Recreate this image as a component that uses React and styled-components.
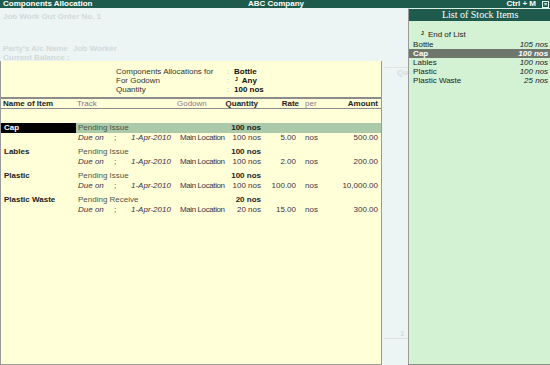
import React from "react";
import styled, { createGlobalStyle } from "styled-components";

const GlobalStyle = createGlobalStyle`
  body {
    margin: 0;
    background: #ecf4f4;
    font-family: "Liberation Sans", Arial, sans-serif;
  }
`;

const cols = "75px 36px 16px 48px 46px 40px 37px 26px 1fr";

const allocations = [
    { name: "Cap", track: "Pending Issue", qty: "100 nos", due: "1-Apr-2010", godown: "Main Location", rate: "5.00", amount: "500.00", selected: true },
    { name: "Lables", track: "Pending Issue", qty: "100 nos", due: "1-Apr-2010", godown: "Main Location", rate: "2.00", amount: "200.00" },
    { name: "Plastic", track: "Pending Issue", qty: "100 nos", due: "1-Apr-2010", godown: "Main Location", rate: "100.00", amount: "10,000.00" },
    { name: "Plastic Waste", track: "Pending Receive", qty: "20 nos", due: "1-Apr-2010", godown: "Main Location", rate: "15.00", amount: "300.00" },
];

const stockItems = [
    { name: "Bottle", qty: "105 nos" },
    { name: "Cap", qty: "100 nos", selected: true },
    { name: "Lables", qty: "100 nos" },
    { name: "Plastic", qty: "100 nos" },
    { name: "Plastic Waste", qty: "25 nos" },
];

const Frame = styled.div`
    width: 550px;
    height: 365px;
    display: flex;
    flex-direction: column;
    background: #ecf4f4;
    overflow: hidden;
    font-size: 8px;
    color: #222;
`;

const TitleBar = styled.div`
    height: 8px;
    flex: none;
    display: grid;
    grid-template-columns: 1fr auto 1fr;
    align-items: center;
    background: #1e5b4c;
    color: #fff;
    font-weight: bold;
    font-size: 8px;
    line-height: 8px;
    padding: 0 1px 0 3px;
`;

const TitleRight = styled.div`
    display: flex;
    justify-content: flex-end;
    align-items: center;
    gap: 6px;
`;

const CloseBox = styled.span`
    width: 5px;
    height: 5px;
    border: 1px solid #dfe;
    display: flex;
    align-items: center;
    justify-content: center;
    font-size: 6px;
    line-height: 5px;
`;

const Body = styled.div`
    flex: 1;
    display: flex;
    min-height: 0;
`;

const MainArea = styled.div`
    flex: 1;
    display: flex;
    flex-direction: column;
`;

const VoucherInfo = styled.div`
    height: 53px;
    flex: none;
    overflow: hidden;
    padding: 4px 0 0 3px;
    box-sizing: border-box;
    color: #d2dada;
    font-weight: bold;
    line-height: 10px;
`;

const FadedLine = styled.div`
    display: flex;
    margin-top: ${(p) => p.$top || 0}px;
    line-height: ${(p) => p.$lh || 10}px;
`;

const FadedLabel = styled.span`
    width: ${(p) => p.$w}px;
    flex: none;
`;

const Lower = styled.div`
    flex: 1;
    display: flex;
`;

const AllocPanel = styled.div`
    width: 382px;
    flex: none;
    box-sizing: border-box;
    background: #ffffd8;
    border-left: 1px solid #9a9a9a;
    border-right: 1px solid #9a9a9a;
    border-bottom: 1px solid #9a9a9a;
    padding-top: 6px;
`;

const InfoGrid = styled.div`
    display: grid;
    grid-template-columns: 111px 7px auto;
    margin-left: 115px;
    line-height: 9px;
    margin-bottom: 3px;
`;

const InfoLabel = styled.div`
    color: #333;
`;

const Colon = styled.div`
    color: #bbb;
`;

const InfoValue = styled.div`
    font-weight: bold;
    color: #111;
`;

const Enter = styled.span`
    font-size: 5px;
    vertical-align: top;
    line-height: 6px;
    margin: 0 4px 0 1px;
    font-weight: bold;
`;

const HeaderRow = styled.div`
    display: grid;
    grid-template-columns: ${cols};
    border-top: 2px solid #8c8c8c;
    border-bottom: 1px solid #8c8c8c;
    line-height: 9px;
    margin-bottom: 14px;
`;

const Cell = styled.div`
    padding-left: ${(p) => p.$pl || 0}px;
    padding-right: ${(p) => p.$pr || 0}px;
    text-align: ${(p) => p.$align || "left"};
    font-weight: ${(p) => (p.$bold ? "bold" : "normal")};
    font-style: ${(p) => (p.$italic ? "italic" : "normal")};
    color: ${(p) => p.$color || "inherit"};
    letter-spacing: ${(p) => p.$ls || 0}px;
    white-space: nowrap;
    grid-column: ${(p) => p.$span || "auto"};
`;

const Group = styled.div`
    margin-bottom: 4px;
`;

const ItemLine = styled.div`
    display: grid;
    grid-template-columns: ${cols};
    line-height: 10px;
    background: ${(p) => (p.$selected ? "#aacaa9" : "transparent")};
`;

const NameCell = styled.div`
    padding-left: 3px;
    font-weight: bold;
    color: ${(p) => (p.$selected ? "#fff" : "#222")};
    background: ${(p) => (p.$selected ? "#000" : "#ffffd8")};
    white-space: nowrap;
`;

const DueLine = styled.div`
    display: grid;
    grid-template-columns: ${cols};
    line-height: 10px;
    color: #3e2f4a;
`;

const Strip = styled.div`
    flex: 1;
    display: flex;
    flex-direction: column;
    padding-top: 6px;
    color: #d6dddd;
    overflow: hidden;
`;

const StripRule = styled.div`
    height: 1px;
    background: #dde3e3;
    margin-left: 2px;
`;

const StripText = styled.div`
    padding-left: ${(p) => p.$pl || 0}px;
    line-height: 9px;
    font-weight: bold;
    margin-top: ${(p) => p.$mt || 0};
`;

const SidePanel = styled.div`
    width: 143px;
    flex: none;
    box-sizing: border-box;
    background: #d3f1d3;
    border-left: 1px solid #9a9a9a;
    border-bottom: 1px solid #8c8c8c;
    border-top: 1px solid #dcefe3;
    display: flex;
    flex-direction: column;
`;

const SideHeader = styled.div`
    height: 12px;
    background: #1e5b4c;
    color: #fff;
    font-family: "Liberation Serif", "Times New Roman", serif;
    font-size: 10px;
    line-height: 12px;
    text-align: center;
`;

const StockList = styled.div`
    padding-top: 9px;
    font-size: 8px;
`;

const StockRow = styled.div`
    display: flex;
    justify-content: space-between;
    height: 9px;
    line-height: 9px;
    padding: 0 3px 0 ${(p) => p.$pl || 4}px;
    margin-bottom: ${(p) => p.$mb || 0}px;
    background: ${(p) => (p.$selected ? "#6f776c" : "transparent")};
    color: ${(p) => (p.$selected ? "#fff" : "#222")};
    font-weight: ${(p) => (p.$selected ? "bold" : "normal")};
`;

const StockQty = styled.span`
    font-style: italic;
`;

function Allocation({ row }) {
    return (
        <Group>
            <ItemLine $selected={row.selected}>
                <NameCell $selected={row.selected}>{row.name}</NameCell>
                <Cell $span="2 / 6" $pl={2} $color="#4c564c">{row.track}</Cell>
                <Cell $align="right" $pr={1} $bold>{row.qty}</Cell>
            </ItemLine>
            <DueLine>
                <div />
                <Cell $pl={2} $italic>Due on</Cell>
                <Cell $pl={2}>;</Cell>
                <Cell $pl={3} $italic>{row.due}</Cell>
                <Cell $pl={4} $ls={-0.4}>{row.godown}</Cell>
                <Cell $align="right" $pr={1}>{row.qty}</Cell>
                <Cell $align="right" $pr={3}>{row.rate}</Cell>
                <Cell $pl={6}>nos</Cell>
                <Cell $align="right" $pr={3}>{row.amount}</Cell>
            </DueLine>
        </Group>
    );
}

export default function App() {
    return (
        <>
            <GlobalStyle />
            <Frame>
                <TitleBar>
                    <span>Components Allocation</span>
                    <span>ABC Company</span>
                    <TitleRight>
                        <span>Ctrl + M</span>
                        <CloseBox>×</CloseBox>
                    </TitleRight>
                </TitleBar>
                <Body>
                    <MainArea>
                        <VoucherInfo>
                            <FadedLine>Job Work Out Order No. 1</FadedLine>
                            <FadedLine $top={22} $lh={9}>
                                <FadedLabel $w={70}>Party's A/c Name</FadedLabel>
                                <span>Job Worker</span>
                            </FadedLine>
                            <FadedLine $lh={9}>
                                <FadedLabel $w={64}>Current Balance</FadedLabel>
                                <span>:</span>
                            </FadedLine>
                        </VoucherInfo>
                        <Lower>
                            <AllocPanel>
                                <InfoGrid>
                                    <InfoLabel>Components Allocations for</InfoLabel>
                                    <Colon>:</Colon>
                                    <InfoValue>Bottle</InfoValue>
                                    <InfoLabel>For Godown</InfoLabel>
                                    <Colon>:</Colon>
                                    <InfoValue><Enter>J</Enter>Any</InfoValue>
                                    <InfoLabel>Quantity</InfoLabel>
                                    <Colon>:</Colon>
                                    <InfoValue>100 nos</InfoValue>
                                </InfoGrid>
                                <HeaderRow>
                                    <Cell $pl={2} $bold>Name of Item</Cell>
                                    <Cell $span="2 / 5" $pl={1} $color="#8a6f88">Track</Cell>
                                    <Cell $pl={1} $color="#8a7a8a">Godown</Cell>
                                    <Cell $align="right" $pr={4} $bold>Quantity</Cell>
                                    <Cell $align="right" $bold>Rate</Cell>
                                    <Cell $pl={6} $color="#8a7a8a">per</Cell>
                                    <Cell $align="right" $pr={3} $bold>Amount</Cell>
                                </HeaderRow>
                                {allocations.map((row) => (
                                    <Allocation key={row.name} row={row} />
                                ))}
                            </AllocPanel>
                            <Strip>
                                <StripRule />
                                <StripText $pl={15}>Qu</StripText>
                                <StripText $pl={18} $mt="auto">1</StripText>
                                <StripRule />
                                <StripText $mt="26px" />
                            </Strip>
                        </Lower>
                    </MainArea>
                    <SidePanel>
                        <SideHeader>List of Stock Items</SideHeader>
                        <StockList>
                            <StockRow $pl={11} $mb={1}>
                                <span><Enter>J</Enter>End of List</span>
                            </StockRow>
                            {stockItems.map((item) => (
                                <StockRow key={item.name} $selected={item.selected}>
                                    <span>{item.name}</span>
                                    <StockQty>{item.qty}</StockQty>
                                </StockRow>
                            ))}
                        </StockList>
                    </SidePanel>
                </Body>
            </Frame>
        </>
    );
}
